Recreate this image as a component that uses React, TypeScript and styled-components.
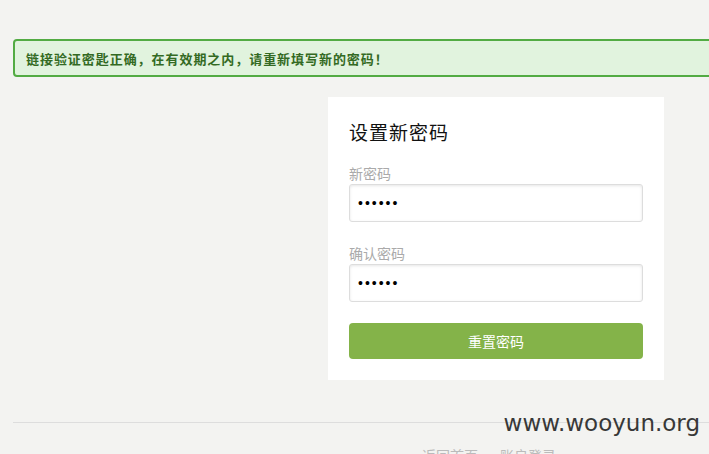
import React from "react";
import { createGlobalStyle, styled } from "styled-components";

const GlobalStyle = createGlobalStyle`
  html, body {
    margin: 0;
    padding: 0;
    background-color: #f3f3f1;
    overflow: hidden;
  }
  body {
    font-family: "Noto Sans CJK SC", "Noto Sans", sans-serif;
  }
`;

const App = () => {
  return (
    <Page>
      <GlobalStyle />
      <Wrapper>
        <Alert>链接验证密匙正确，在有效期之内，请重新填写新的密码！</Alert>
        <Card>
          <CardTitle>设置新密码</CardTitle>
          <Field>
            <Label>新密码</Label>
            <Input type="password" defaultValue="123456" readOnly />
          </Field>
          <Field>
            <Label>确认密码</Label>
            <Input type="password" defaultValue="123456" readOnly />
          </Field>
          <SubmitButton>重置密码</SubmitButton>
        </Card>
        <Footer>
          <FooterLink>返回首页</FooterLink>
          <FooterLink>账户登录</FooterLink>
        </Footer>
      </Wrapper>
      <Watermark>www.wooyun.org</Watermark>
    </Page>
  );
};

const Page = styled.div`
  position: relative;
  width: 709px;
  height: 454px;
  overflow: hidden;
`;

const Wrapper = styled.div`
  width: 966px;
  margin-left: 13px;
  padding-top: 39px;
`;

const Alert = styled.div`
  box-sizing: border-box;
  height: 38px;
  border: 2px solid #52ab43;
  border-radius: 4px;
  background-color: #e1f3de;
  padding-left: 11px;
  display: flex;
  align-items: center;
  font-size: 13px;
  font-weight: 700;
  letter-spacing: 0.95px;
  color: #336a23;
`;

const Card = styled.div`
  box-sizing: border-box;
  width: 336px;
  margin: 20px auto 0;
  padding: 20px 21px 21px;
  background-color: #fff;
`;

const CardTitle = styled.div`
  font-size: 19px;
  letter-spacing: 1px;
  line-height: 30px;
  color: #111;
  margin-bottom: 16px;
`;

const Field = styled.div`
  display: flex;
  flex-direction: column;
  gap: 1px;
  margin-bottom: 21px;
`;

const Label = styled.label`
  font-size: 14px;
  line-height: 20px;
  color: #aaa;
`;

const Input = styled.input`
  box-sizing: border-box;
  width: 100%;
  height: 38px;
  border: 1px solid #ddd;
  border-radius: 3px;
  box-shadow: inset 0 1px 3px rgba(0, 0, 0, 0.1);
  padding: 0 8px;
  font-size: 14px;
  letter-spacing: 2px;
  color: #000;
  outline: none;
  background: #fff;
`;

const SubmitButton = styled.button`
  width: 100%;
  height: 36px;
  border: none;
  border-radius: 4px;
  background-color: #84b349;
  color: #fff;
  font-family: "Noto Sans CJK SC", sans-serif;
  font-size: 14px;
  cursor: pointer;
`;

const Footer = styled.div`
  margin-top: 42px;
  border-top: 1px solid #ddd;
  padding-top: 22px;
  padding-right: 14px;
  display: flex;
  justify-content: center;
  gap: 22px;
`;

const FooterLink = styled.a`
  font-size: 14px;
  line-height: 20px;
  color: #bbb;
`;

const Watermark = styled.div`
  position: absolute;
  right: 9px;
  top: 408px;
  font-family: "DejaVu Sans", sans-serif;
  font-size: 23px;
  color: #383838;
  line-height: 30px;
`;

export default App;
